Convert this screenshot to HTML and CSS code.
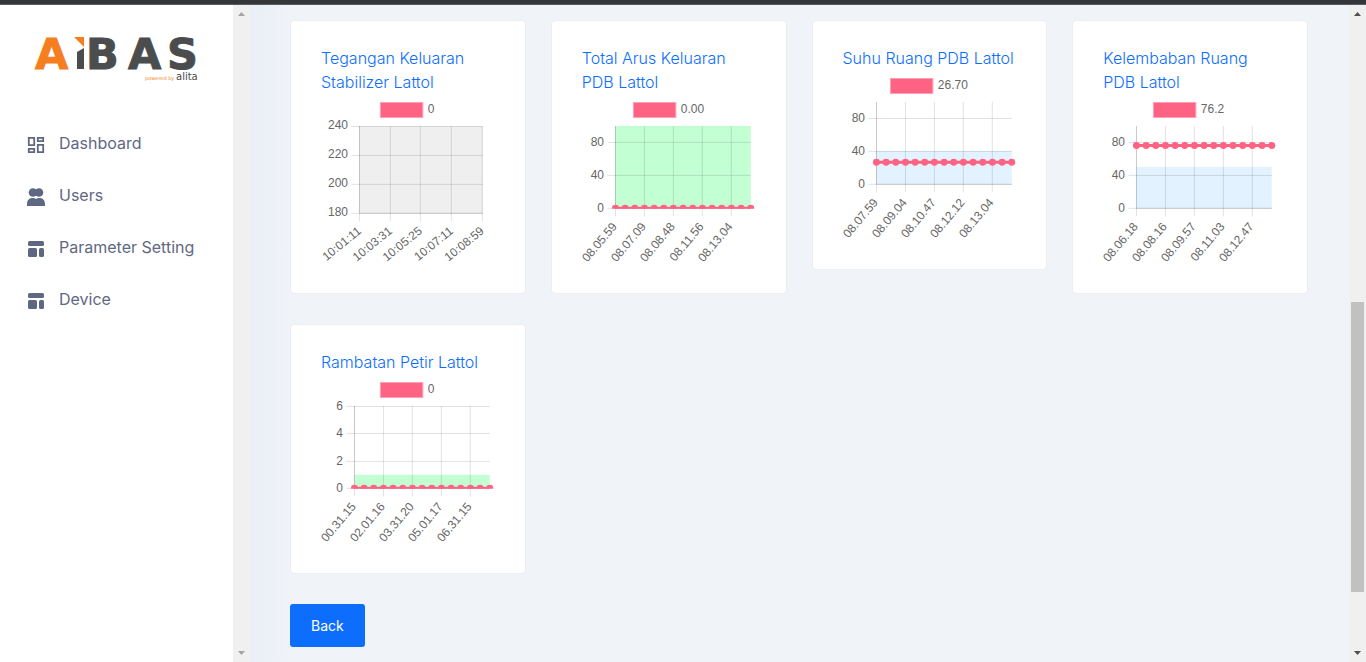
FILE: index.html
```html
<!DOCTYPE html>
<html lang="id">
<head>
<meta charset="utf-8">
<meta name="viewport" content="width=device-width, initial-scale=1">
<title>AiBAS</title>
<link rel="stylesheet" href="styles.css">
</head>
<body>
<div class="topbar"></div>
<div class="layout">
  <aside class="sidebar">
    <a class="brand" href="#" aria-label="AiBAS powered by alita">
      <svg class="logo" viewBox="0 0 170 60" width="170" height="60">
        <g class="logo-letters">
          <text class="orange" x="3" y="46">A</text>
          <text x="54" y="46">B</text>
          <text x="96" y="46">A</text>
          <text x="135" y="46">S</text>
        </g>
        <path class="orange" d="M42 14H52V24Z"/>
        <path class="dark" d="M45 29L52 25V46H45Z"/>
        <text class="orange powered" x="113" y="57">powered by</text>
        <text class="dark alita" x="144" y="57">alita</text>
      </svg>
    </a>
    <nav class="menu">
      <a class="menu-link" href="#">
        <svg class="icon" viewBox="0 0 18 18"><path fill="none" stroke="currentColor" stroke-width="1.800" d="M1.800 1.800h5.400v7.400H1.800zM10.800 1.800h5.400v3.400h-5.400zM10.800 8.800h5.400v7.400h-5.400zM1.800 12.800h5.400v3.400H1.800z"/></svg>
        <span>Dashboard</span>
      </a>
      <a class="menu-link" href="#">
        <svg class="icon" viewBox="0 0 18 18"><g fill="currentColor"><circle cx="6" cy="4.500" r="4.300"/><circle cx="12" cy="4.500" r="4.300"/><path d="M0 18v-2c0-4 2.500-6 5.500-6 1.500 0 2.500.3 3.500 1 1-.7 2-1 3.500-1 3 0 5.500 2 5.500 6v2z"/></g></svg>
        <span>Users</span>
      </a>
      <a class="menu-link" href="#">
        <svg class="icon" viewBox="0 0 18 18"><g fill="currentColor"><rect x="1" y="1" width="16" height="5" rx="1.500"/><rect x="1" y="8" width="9" height="9" rx="1.500"/><rect x="12" y="8" width="5" height="9" rx="1.500"/></g></svg>
        <span>Parameter Setting</span>
      </a>
      <a class="menu-link" href="#">
        <svg class="icon" viewBox="0 0 18 18"><g fill="currentColor"><rect x="1" y="1" width="16" height="5" rx="1.500"/><rect x="1" y="8" width="9" height="9" rx="1.500"/><rect x="12" y="8" width="5" height="9" rx="1.500"/></g></svg>
        <span>Device</span>
      </a>
    </nav>
  </aside>
  <div class="scrollbar scrollbar-idle" aria-hidden="true">
    <svg class="arrow" viewBox="0 0 17 17"><path d="M5 11h7L8.500 7z"/></svg>
    <span></span><span></span><span></span>
    <svg class="arrow" viewBox="0 0 17 17"><path d="M5 6h7l-3.500 4z"/></svg>
  </div>
  <main class="content">
    <div class="cards">
      <section class="card"><h2 class="card-title">Tegangan Keluaran Stabilizer Lattol</h2><svg class="chart" data-chart="tegangan" viewBox="0 0 174 174"></svg></section>
      <section class="card"><h2 class="card-title">Total Arus Keluaran PDB Lattol</h2><svg class="chart" data-chart="arus" viewBox="0 0 174 174"></svg></section>
      <section class="card"><h2 class="card-title">Suhu Ruang PDB Lattol</h2><svg class="chart" data-chart="suhu" viewBox="0 0 174 174"></svg></section>
      <section class="card"><h2 class="card-title">Kelembaban Ruang PDB Lattol</h2><svg class="chart" data-chart="kelembaban" viewBox="0 0 174 174"></svg></section>
      <section class="card"><h2 class="card-title">Rambatan Petir Lattol</h2><svg class="chart" data-chart="petir" viewBox="0 0 174 174"></svg></section>
    </div>
    <button class="back" type="button">Back</button>
  </main>
  <div class="scrollbar" aria-hidden="true">
    <svg class="arrow" viewBox="0 0 17 17"><path d="M5 11h7L8.500 7z"/></svg>
    <span></span><span class="thumb"></span><span></span>
    <svg class="arrow" viewBox="0 0 17 17"><path d="M5 6h7l-3.500 4z"/></svg>
  </div>
</div>
<script src="charts.js"></script>
</body>
</html>
```
FILE: styles.css
```css
* { box-sizing: border-box; }

body {
  margin: 0;
  min-height: 100vh;
  display: flex;
  flex-direction: column;
  background: #f0f3f8;
  font-family: Inter, "Liberation Sans", sans-serif;
  font-size: 16px;
}

.topbar {
  height: 5px;
  background: #35363a;
  border-bottom: 1px solid #5b5c60;
}

.layout { display: flex; flex: 1; }

.sidebar {
  flex: 0 0 233px;
  background: #fff;
  padding: 18px 0 0;
}

.brand { display: block; padding-left: 32px; }
.logo { display: block; overflow: visible; }
.logo-letters {
  font: bold 43px "DejaVu Sans", sans-serif;
  fill: #4b4c4e;
  stroke: #4b4c4e;
}
.logo .orange { fill: #f57f20; }
.logo-letters .orange { stroke: #f57f20; }
.logo .dark { fill: #4b4c4e; }
.powered { font: 5px "DejaVu Sans", sans-serif; }
.alita { font: 10px "DejaVu Sans", sans-serif; }

.menu { padding: 34px 27px 0; }
.menu-link {
  display: flex;
  align-items: center;
  gap: 14px;
  height: 52px;
  color: #5f6883;
  line-height: 24px;
  text-decoration: none;
  white-space: nowrap;
}
.icon { width: 18px; height: 18px; margin-top: 4px; }

.scrollbar {
  flex: 0 0 17px;
  display: grid;
  grid-template-rows: 17px 280fr 290fr 53fr 17px;
  background: #f0f0f0;
}
.arrow { width: 17px; height: 17px; fill: #505050; }
.scrollbar-idle .arrow { fill: #a3a3a3; }
.thumb { margin: 0 2px; background: #c1c1c1; }

.content {
  flex: 1;
  min-width: 0;
  padding: 15px 41px 15px 40px;
  background: linear-gradient(90deg, #eaeff5, #f0f3f8 40px);
}

.cards {
  display: grid;
  grid-template-columns: repeat(4, 1fr);
  gap: 30px 25px;
  align-items: start;
  margin-bottom: 30px;
}
.card {
  padding: 25px 30px;
  background: #fff;
  background-clip: padding-box;
  border: 1px solid #ebeef2;
  border-radius: 4px;
}
.card-title {
  margin: 0;
  color: #0d6efd;
  font-size: 16px;
  font-weight: 300;
  line-height: 24px;
}

.chart {
  display: block;
  width: 100%;
  overflow: visible;
  font: 12px "Liberation Sans", Arial, sans-serif;
  fill: #666;
}
.grid { stroke: rgba(0, 0, 0, .12); }
.zero { stroke: rgba(0, 0, 0, .12); }
.series { fill: #ff6384; stroke: #ff6384; stroke-width: 3; }
.point { fill: #ff6384; }
.swatch { fill: #ff6384; stroke: #ffa1b5; }

.back {
  display: block;
  padding: 9px 21px;
  border: 0;
  border-radius: 3px;
  background: #0d6efd;
  color: #fff;
  font: 14px/25px Inter, "Liberation Sans", sans-serif;
}
```
FILE: charts.js
```js
const rows = [["80", 48.5], ["40", 81.5], ["0", 114.5]];
const cols = [33.5, 62.5, 91.5, 120.5, 149.5];
const base = { x0: 33.5, x1: 169, top: 32, bottom: 114.5, cols, rows, angle: 50, drop: 3.5, shift: -1 };

const charts = {
  tegangan: { ...base, x0: 38.5, x1: 162, bottom: 119.5, angle: 39, drop: 2.5, shift: 0,
    legend: "0", swatch: 59, band: [32, "#efefef"],
    cols: [38.5, 69.5, 99.5, 130.5, 161.5],
    rows: [["240", 32.5], ["220", 61.5], ["200", 90.5], ["180", 119.5]],
    labels: ["10:01:11", "10:03:31", "10:05:25", "10:07:11", "10:08:59"] },
  arus: { ...base, legend: "0.00", swatch: 51, band: [32, "#c2ffd3"], line: 114.5,
    labels: ["08.05.59", "08.07.09", "08.08.48", "08.11.56", "08.13.04"] },
  suhu: { ...base, legend: "26.70", swatch: 47, band: [81, "#e3f2ff"], line: 92.5,
    labels: ["08.07.59", "08.09.04", "08.10.47", "08.12.12", "08.13.04"] },
  kelembaban: { ...base, legend: "76.2", swatch: 50, band: [73, "#e3f2ff"], line: 51.5,
    labels: ["08.06.18", "08.08.16", "08.09.57", "08.11.03", "08.12.47"] },
  petir: { ...base, legend: "0", swatch: 59, band: [101, "#c2ffd3"], line: 114.5,
    rows: [["6", 32.5], ["4", 59.5], ["2", 87.5], ["0", 114.5]],
    labels: ["00.31.15", "02.01.16", "03.31.20", "05.01.17", "06.31.15"] }
};

function draw(svg, c) {
  const id = "clip-" + svg.dataset.chart;
  let out = `<clipPath id="${id}"><rect x="0" y="0" width="174" height="${c.bottom + 0.5}"/></clipPath>`;
  out += `<rect class="swatch" x="${c.swatch + 0.5}" y="8.5" width="42.5" height="15"/>`;
  out += `<text x="${c.swatch + 48}" y="19">${c.legend}</text>`;
  out += `<rect x="${c.x0}" y="${c.band[0]}" width="${c.x1 - c.x0}" height="${c.bottom - c.band[0]}" fill="${c.band[1]}"/>`;
  c.rows.forEach(([label, y]) => {
    out += `<path class="grid" d="M${c.x0 - 8} ${y}H${c.x1}"/>`;
    out += `<text x="${c.x0 - 11.5}" y="${y + c.drop}" text-anchor="end">${label}</text>`;
  });
  c.cols.forEach((x, i) => {
    out += `<path class="grid" d="M${x} ${c.top}V${c.bottom + 8}"/>`;
    out += `<text transform="translate(${x + c.shift} ${c.bottom + 16}) rotate(${-c.angle})" y="4" text-anchor="end">${c.labels[i]}</text>`;
  });
  out += `<path class="zero" fill="none" d="M${c.x0} ${c.top}V${c.bottom}H${c.x1}"/>`;
  if (c.line) {
    out += `<g clip-path="url(#${id})"><path class="series" d="M${c.x0} ${c.line}H${c.x1}"/>`;
    for (let i = 0; i < 15; i++) {
      out += `<circle class="point" cx="${c.x0 + (c.x1 - c.x0) * i / 14}" cy="${c.line}" r="3.5"/>`;
    }
    out += "</g>";
  }
  svg.innerHTML = out;
}

document.querySelectorAll("[data-chart]").forEach(svg => draw(svg, charts[svg.dataset.chart]));
```
